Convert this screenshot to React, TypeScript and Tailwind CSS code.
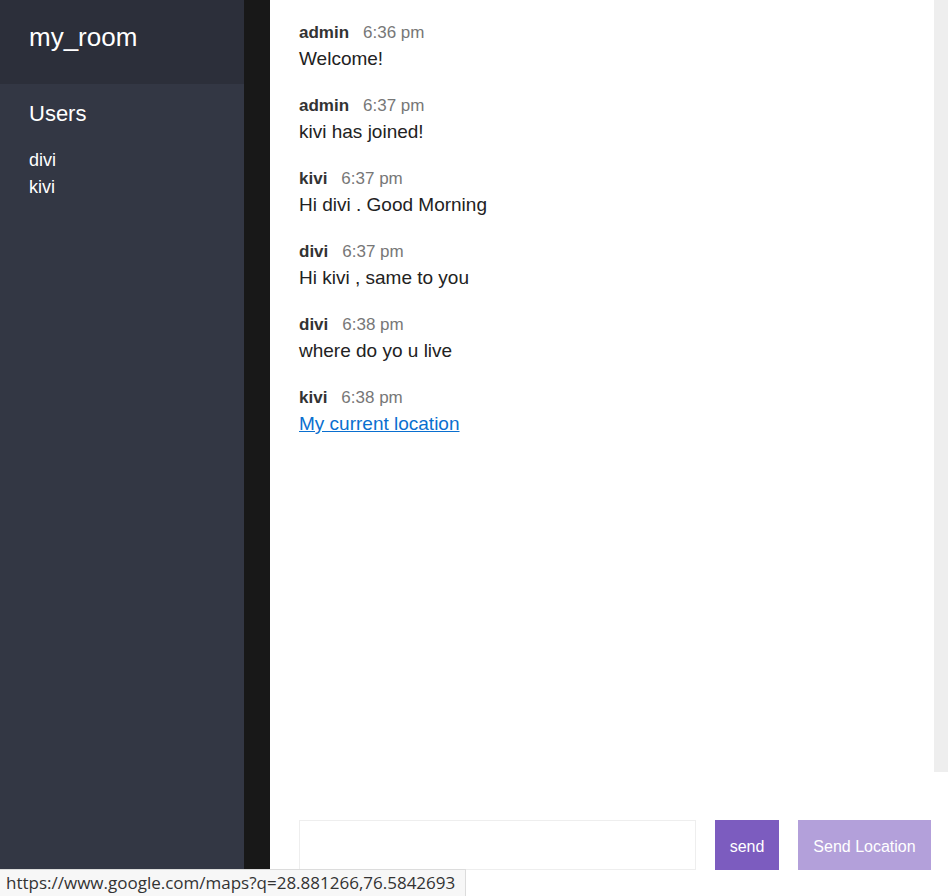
import React from "react";

const messages = [
  { user: "admin", time: "6:36 pm", text: "Welcome!" },
  { user: "admin", time: "6:37 pm", text: "kivi has joined!" },
  { user: "kivi", time: "6:37 pm", text: "Hi divi . Good Morning" },
  { user: "divi", time: "6:37 pm", text: "Hi kivi , same to you" },
  { user: "divi", time: "6:38 pm", text: "where do yo u live" },
  { user: "kivi", time: "6:38 pm", text: "My current location", link: true },
];

const users = ["divi", "kivi"];

const App = () => {
  return (
    <div
      className="relative flex h-[896px] w-[948px] overflow-hidden bg-white"
      style={{ fontFamily: '"Liberation Sans", Arial, sans-serif' }}
    >
      {/* Sidebar */}
      <div className="flex w-[244px] shrink-0 flex-col bg-[#333744] text-white">
        <h2 className="flex h-[84px] items-center bg-[#2c2f3a] px-[29px] pb-[10px] text-[26px]">
          my_room
        </h2>
        <h3 className="px-[29px] pt-[17px] text-[22px] leading-[26px]">Users</h3>
        <ul className="px-[29px] pt-[20px] text-[18px] leading-[27px]">
          {users.map((u) => (
            <li key={u}>{u}</li>
          ))}
        </ul>
      </div>

      <div className="w-[26px] shrink-0 bg-[#181818]" />

      {/* Chat */}
      <div className="flex flex-1 flex-col">
        <div className="flex h-[772px] flex-row">
          <div className="flex-1 px-[29px] pt-[20px]">
            {messages.map((m, i) => (
              <div key={i} className="mb-[21px]">
                <p className="text-[17px] leading-[26px]">
                  <span className="mr-[14px] font-bold text-[#333]">{m.user}</span>
                  <span className="text-[#777]">{m.time}</span>
                </p>
                {m.link ? (
                  <a href="#" className="text-[19px] leading-[26px] text-[#0a6fcf] underline">
                    {m.text}
                  </a>
                ) : (
                  <p className="text-[19px] leading-[26px] text-[#222]">{m.text}</p>
                )}
              </div>
            ))}
          </div>
          <div className="w-[14px] bg-[#eeeeee]" />
        </div>

        <div className="flex items-start gap-[19px] pl-[29px] pr-[17px] pt-[48px]">
          <input className="h-[50px] flex-1 border border-[#eeeeee] px-3 outline-none" />
          <button className="h-[50px] w-[64px] bg-[#7c5cbf] pt-[4px] text-[16px] text-white">send</button>
          <button className="h-[50px] w-[133px] bg-[#b3a0da] pt-[4px] text-[16px] text-white">
            Send Location
          </button>
        </div>
      </div>

      {/* Browser status bubble */}
      <div
        className="absolute bottom-0 left-0 flex h-[27px] w-[466px] items-center border-t border-r border-[#dcdcdc] bg-[#f7f7f7] pl-[6px] text-[17px] text-[#333]"
        style={{ fontFamily: '"Open Sans", "Noto Sans", sans-serif' }}
      >
        https://www.google.com/maps?q=28.881266,76.5842693
      </div>
    </div>
  );
};

export default App;
